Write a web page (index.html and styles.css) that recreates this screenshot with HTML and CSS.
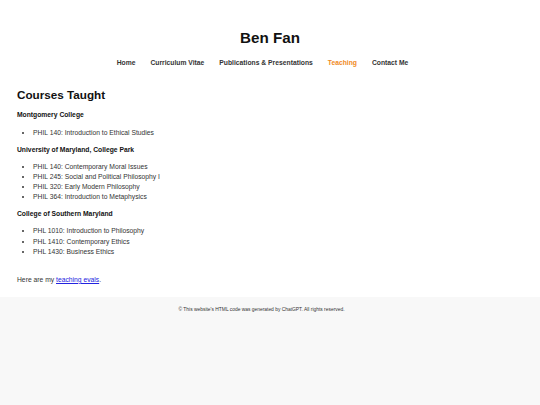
FILE: index.html
```html
<!DOCTYPE html>
<html>
<head>
	<title>Ben Fan - Teaching</title>
	<link rel="stylesheet" href="styles.css">
</head>
<body>
	<div class="page">
		<header>
			<h1>Ben Fan</h1>
			<nav>
				<a href="#">Home</a>
				<a href="#">Curriculum Vitae</a>
				<a href="#">Publications &amp; Presentations</a>
				<a href="#" class="active">Teaching</a>
				<a href="#">Contact Me</a>
			</nav>
		</header>
		<main>
			<h2>Courses Taught</h2>
			<h3>Montgomery College</h3>
			<ul>
				<li>PHIL 140: Introduction to Ethical Studies</li>
			</ul>
			<h3>University of Maryland, College Park</h3>
			<ul>
				<li>PHIL 140: Contemporary Moral Issues</li>
				<li>PHIL 245: Social and Political Philosophy I</li>
				<li>PHIL 320: Early Modern Philosophy</li>
				<li>PHIL 364: Introduction to Metaphysics</li>
			</ul>
			<h3>College of Southern Maryland</h3>
			<ul>
				<li>PHL 1010: Introduction to Philosophy</li>
				<li>PHL 1410: Contemporary Ethics</li>
				<li>PHL 1430: Business Ethics</li>
			</ul>
			<p class="evals">Here are my <a href="#">teaching evals</a>.</p>
		</main>
	</div>
	<footer>
		<p>&copy; This website's HTML code was generated by ChatGPT. All rights reserved.</p>
	</footer>
</body>
</html>
```
FILE: styles.css
```css
body {
	margin: 0;
	font-family: "Liberation Sans", Arial, sans-serif;
	font-size: 6.75px;
	line-height: 1.5;
	color: #333;
	background-color: #f8f8f8;
}

.page {
	background-color: #fff;
	padding-bottom: 12px;
}

header {
	text-align: center;
	padding-top: 27px;
}

h1 {
	margin: 0;
	font-size: 15.2px;
	color: #111;
}

nav {
	display: flex;
	justify-content: center;
	margin-top: 8.5px;
}

	nav a {
		margin-right: 15px;
		font-weight: bold;
		color: #333;
		text-decoration: none;
	}

	nav a.active {
		color: #f08a24;
	}

main {
	padding: 0 17px;
}

h2 {
	margin: 20px 0 8px;
	font-size: 11.7px;
	line-height: 1.2;
	color: #111;
}

h3 {
	margin: 7px 0;
	font-size: 6.75px;
	color: #111;
}

ul {
	margin: 7px 0;
	padding-left: 16px;
}

.evals {
	margin: 18px 0 0;
}

	.evals a {
		color: #2323e0;
	}

footer {
	text-align: center;
	padding: 9px 17px 9px 0;
}

	footer p {
		margin: 0;
		font-size: 4.9px;
		color: #333;
	}
```
